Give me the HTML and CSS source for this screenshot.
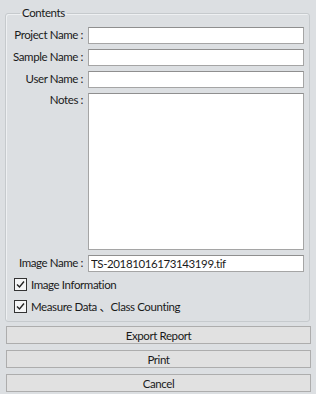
FILE: index.html
```html
<!DOCTYPE html>
<html lang="en">
<head>
    <meta charset="UTF-8">
    <meta name="viewport" content="width=device-width, initial-scale=1.0">
    <title>Report</title>
    <link rel="stylesheet" href="styles.css">
</head>
<body>
    <div class="dialog">
        <fieldset class="group">
            <legend>Contents</legend>
            <div class="fields">
                <label for="projectName">Project Name :</label>
                <input type="text" id="projectName">
                <label for="sampleName">Sample Name :</label>
                <input type="text" id="sampleName">
                <label for="userName">User Name :</label>
                <input type="text" id="userName">
                <label for="notes" class="top">Notes :</label>
                <textarea id="notes"></textarea>
                <label for="imageName">Image Name :</label>
                <input type="text" id="imageName" value="TS-20181016173143199.tif">
            </div>
            <div class="check first">
                <span class="box"><svg width="11" height="11" viewBox="0 0 11 11"><path d="M2 5.5 L4.5 8 L9 2.5" fill="none" stroke="#222" stroke-width="1.4"/></svg></span>
                <span>Image Information</span>
            </div>
            <div class="check">
                <span class="box"><svg width="11" height="11" viewBox="0 0 11 11"><path d="M2 5.5 L4.5 8 L9 2.5" fill="none" stroke="#222" stroke-width="1.4"/></svg></span>
                <span>Measure Data 、Class Counting</span>
            </div>
        </fieldset>
        <button class="btn">Export Report</button>
        <button class="btn">Print</button>
        <button class="btn">Cancel</button>
    </div>
</body>
</html>
```

FILE: styles.css
```css
body {
    margin: 0;
    background-color: #dcdfe2;
    font-family: Lato, "Noto Sans CJK JP", sans-serif;
    font-size: 11.5px;
    letter-spacing: -0.4px;
    color: #1a1a1a;
}
.dialog {
    padding: 6px 6px 0 5px;
}
.group {
    box-sizing: border-box;
    width: 305px;
    margin: 0;
    padding: 7px 5px 8px 8px;
    border: 1px solid #c6cacd;
    border-radius: 3px;
    box-shadow: inset 1px 1px 0 #eef0f2;
}
.group legend {
    padding: 0 2px;
    margin-left: 6px;
    line-height: 14px;
}
.fields {
    display: grid;
    grid-template-columns: 74px 216px;
    column-gap: 5px;
    row-gap: 5px;
    margin-left: -5px;
}
.fields label {
    text-align: right;
    line-height: 16px;
    white-space: nowrap;
}
.fields label.top {
    line-height: 14px;
    padding-top: 0;
}
.fields input,
.fields textarea {
    box-sizing: border-box;
    display: block;
    margin: 0;
    width: 216px;
    height: 17px;
    border: 1px solid #a5a5a5;
    border-top-color: #8f8f8f;
    background-color: #fff;
    font-family: inherit;
    font-size: 11.5px;
    letter-spacing: -0.4px;
    padding: 0 2px;
    color: #1a1a1a;
}
.fields textarea {
    height: 157px;
    resize: none;
}
.check {
    display: flex;
    align-items: center;
    gap: 4px;
    height: 13px;
    line-height: 13px;
    white-space: nowrap;
}
.check.first {
    margin-top: 6px;
}
.check + .check {
    margin-top: 9px;
}
.box {
    box-sizing: border-box;
    width: 13px;
    height: 13px;
    border: 1px solid #333;
    background-color: #f4f5f6;
    display: flex;
    align-items: center;
    justify-content: center;
}
.btn {
    display: block;
    box-sizing: border-box;
    width: 305px;
    height: 18px;
    margin: 4px 0 0 1px;
    padding: 0;
    border: 1px solid #adadad;
    background-color: #e1e1e1;
    font-family: inherit;
    font-size: 11.5px;
    letter-spacing: -0.4px;
    color: #1a1a1a;
}
.btn + .btn {
    margin-top: 6px;
}
```
